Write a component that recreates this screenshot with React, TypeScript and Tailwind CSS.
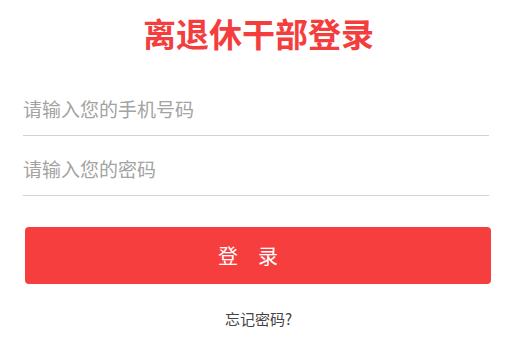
import { useState } from 'react';

const FONT = { fontFamily: '"Noto Sans CJK SC", "Noto Sans", sans-serif' };

export default function App() {
  const [phone, setPhone] = useState('');
  const [password, setPassword] = useState('');

  return (
    <div className="w-[517px] h-[359px] bg-white overflow-hidden" style={FONT}>
      <div className="h-[76px] pt-[13px]">
        <h1 className="text-center text-[33px] leading-[40px] font-bold text-[#f43e3e]">离退休干部登录</h1>
      </div>

      <div className="pl-[23px] pr-[28px]">
        <div className="h-[60px] pt-[6px] flex items-center border-b border-[#d2d2d2]">
          <input
            value={phone}
            onChange={(e) => setPhone(e.target.value)}
            placeholder="请输入您的手机号码"
            className="w-full text-[19px] leading-[26px] text-[#333] placeholder:text-[#a3a3a3] outline-none bg-transparent"
            style={FONT}
          />
        </div>
        <div className="h-[60px] pt-[6px] flex items-center border-b border-[#d2d2d2]">
          <input
            type="password"
            value={password}
            onChange={(e) => setPassword(e.target.value)}
            placeholder="请输入您的密码"
            className="w-full text-[19px] leading-[26px] text-[#333] placeholder:text-[#a3a3a3] outline-none bg-transparent"
            style={FONT}
          />
        </div>
      </div>

      <button
        className="mt-[31px] ml-[25px] w-[466px] h-[57px] rounded-[4px] bg-[#f73e3f] text-white text-[20px] leading-[28px] tracking-[20px]"
        style={FONT}
      >
        登录
      </button>

      <p className="mt-[25px] text-center text-[15px] leading-[20px] text-[#444]">忘记密码?</p>
    </div>
  );
}
